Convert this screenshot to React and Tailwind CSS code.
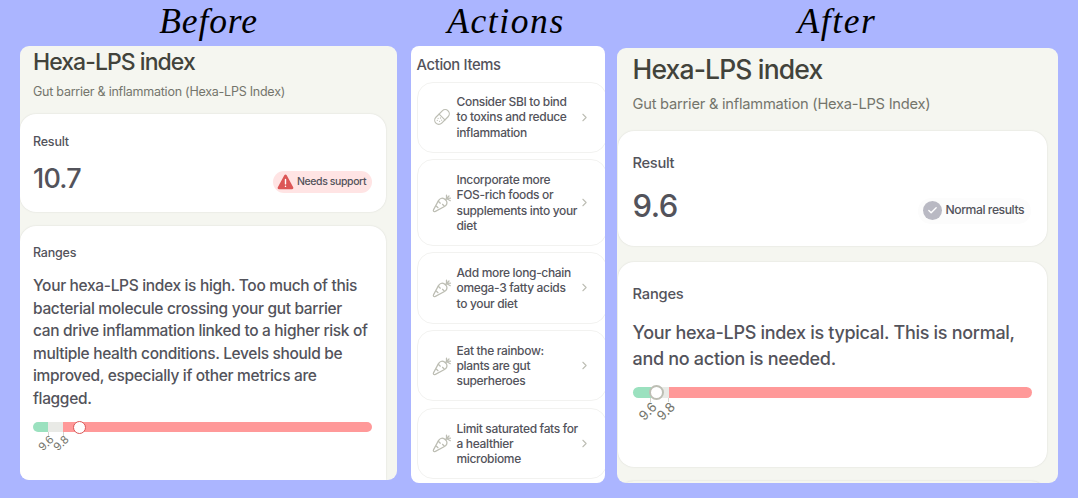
import { FiCheck, FiChevronRight } from 'react-icons/fi'

const actionItems = [
  { icon: 'pill', lines: ['Consider SBI to bind', 'to toxins and reduce', 'inflammation'] },
  { icon: 'carrot', lines: ['Incorporate more', 'FOS-rich foods or', 'supplements into your', 'diet'] },
  { icon: 'carrot', lines: ['Add more long-chain', 'omega-3 fatty acids', 'to your diet'] },
  { icon: 'carrot', lines: ['Eat the rainbow:', 'plants are gut', 'superheroes'] },
  { icon: 'carrot', lines: ['Limit saturated fats for', 'a healthier', 'microbiome'] },
]

const PillIcon = () => (
  <svg viewBox="0 0 20 20" className="size-5" fill="none" stroke="currentColor" strokeWidth="1.2" strokeLinecap="round">
    <g transform="rotate(-45 10 10)">
      <rect x="1.4" y="5.9" width="17.2" height="8.2" rx="4.1" />
      <path d="M10 5.9v8.2" />
      <path d="M4.3 9h.01M6.3 8.2h.01M8.2 9.6h.01M5.2 11.4h.01M7.5 12h.01" />
    </g>
  </svg>
)

const CarrotIcon = () => (
  <svg viewBox="0 0 20 20" className="size-5" fill="none" stroke="currentColor" strokeWidth="1.25" strokeLinecap="round" strokeLinejoin="round">
    <path d="M1.6 18.4c-.5-.5-.3-1.2 0-1.8L6.5 7.6c1.1-2 3.5-3 5.5-2 1.1.5 2 1.4 2.5 2.5.9 2-.1 4.3-2 5.4L3.4 18.4c-.6.3-1.3.5-1.8 0Z" />
    <path d="M6.3 8.2l2 2M4.5 13.2l1.5 1.5M10.5 11.3l1.7 1.7" />
    <path d="M13.3 6.7l3.7-3.7M14.5 5.5V2M14.5 5.5l4-.3M14.5 5.5l3.8 2.2" />
  </svg>
)

const WarningIcon = () => (
  <svg viewBox="0 0 17 16" className="h-4 w-[17px] shrink-0">
    <path d="M7.3 1.2c.5-.9 1.9-.9 2.4 0l6.5 12c.5.9-.1 2-1.2 2H2c-1.1 0-1.7-1.1-1.2-2Z" fill="#dc5757" />
    <path d="M8.5 5.5v4.4M8.5 12.2v.2" stroke="#fff" strokeWidth="1.4" strokeLinecap="round" />
  </svg>
)

const Heading = ({ children, className }) => (
  <h2 className={`font-['Liberation_Serif',serif] text-[35.5px] italic leading-[42px] whitespace-nowrap text-center text-black ${className}`}>
    {children}
  </h2>
)

const BeforePanel = () => (
  <section className="flex h-[434px] flex-col overflow-hidden rounded-[9px] bg-[#f5f6f0] pt-0.5">
    <h1 className="pl-[13px] text-[23px] leading-7 tracking-[-0.95px] text-[#42433b]">Hexa-LPS index</h1>
    <p className="mt-1.5 pl-[13px] text-[12.5px] font-normal leading-5 tracking-[-0.24px] text-[#74756c]">
      Gut barrier &amp; inflammation (Hexa-LPS Index)
    </p>

    <div className="mt-3 h-[98px] w-[366px] shrink-0 rounded-2xl bg-white pl-[13px] pr-3.5 pt-[17.5px] shadow-[0_0_2px_rgba(0,0,0,0.12)]">
      <p className="text-[12.5px] leading-5 tracking-[-0.2px] text-[#53535b]">Result</p>
      <div className="mt-[11px] flex items-center justify-between">
        <span className="text-[27px] leading-8 tracking-[-0.8px] text-[#53535b]">10.7</span>
        <span className="mt-[7px] flex h-[22px] w-[99px] items-center gap-[3px] rounded-full bg-[#ffe4e4] pl-1">
          <WarningIcon />
          <span className="whitespace-nowrap text-[10.5px] tracking-[-0.4px] text-[#53535b]">Needs support</span>
        </span>
      </div>
    </div>

    <div className="mt-[13.5px] w-[366px] flex-1 rounded-t-2xl bg-white pl-[13px] pr-3.5 pt-[17.5px] shadow-[0_0_2px_rgba(0,0,0,0.12)]">
      <p className="text-[12.5px] leading-5 tracking-[-0.2px] text-[#53535b]">Ranges</p>
      <p className="mt-3 whitespace-nowrap text-[15.5px] leading-[22.6px] tracking-[-0.33px] text-[#53535b]">
        Your hexa-LPS index is high. Too much of this<br />
        bacterial molecule crossing your gut barrier<br />
        can drive inflammation linked to a higher risk of<br />
        multiple health conditions. Levels should be<br />
        improved, especially if other metrics are<br />
        flagged.
      </p>
      <div className="relative mt-[11.5px] flex h-[10px] w-[339px]">
        <div className="w-[15px] rounded-l-full bg-[#9be1bf]" />
        <div className="w-[15px] bg-[#e9eae6]" />
        <div className="flex-1 rounded-r-full bg-[#ff9999]" />
        <div className="absolute -top-[1.5px] left-[40px] size-[13px] rounded-full border-[1.5px] border-[#d95757] bg-white" />
        <div className="absolute left-[15px] top-[10px] h-1 w-px bg-[#d3d4ce]" />
        <div className="absolute left-[30px] top-[10px] h-1 w-px bg-[#d3d4ce]" />
        <span className="absolute left-[4px] top-[15px] w-[18px] -rotate-45 text-center text-[11px] font-normal leading-3 text-[#74756c]">9.6</span>
        <span className="absolute left-[19px] top-[15px] w-[18px] -rotate-45 text-center text-[11px] font-normal leading-3 text-[#74756c]">9.8</span>
      </div>
    </div>
  </section>
)

const ActionsPanel = () => (
  <section className="h-[437px] overflow-hidden rounded-[8px] bg-white pl-[5.5px] pt-[9px]">
    <h3 className="text-[14.8px] leading-5 tracking-[-0.35px] text-[#53535b]">Action Items</h3>
    <ul className="mt-[6.5px] flex w-[190px] flex-col gap-[6.5px]">
      {actionItems.map((item) => (
        <li
          key={item.lines[0]}
          className="flex items-center rounded-2xl border border-[#f2f2f0] py-[11.7px] pl-[14px]"
        >
          <span className="w-[25px] shrink-0 text-[#bdbeb4]">
            {item.icon === 'pill' ? <PillIcon /> : <CarrotIcon />}
          </span>
          <p className="w-[121px] text-[12px] leading-[15.3px] tracking-[-0.33px] whitespace-nowrap text-[#53535b]">
            {item.lines.map((line) => (
              <span key={line} className="block">{line}</span>
            ))}
          </p>
          <FiChevronRight className="size-[13px] shrink-0 text-[#bdbeb4]" />
        </li>
      ))}
    </ul>
  </section>
)

const AfterPanel = () => (
  <section className="flex h-[435px] flex-col overflow-hidden rounded-[9px] bg-[#f5f6f0] pl-px pt-[5px]">
    <h1 className="pl-[15px] text-[26.5px] leading-8 tracking-[-0.85px] text-[#42433b]">Hexa-LPS index</h1>
    <p className="mt-[9px] pl-[15px] text-[14.7px] font-normal leading-5 tracking-[-0.24px] text-[#74756c]">
      Gut barrier &amp; inflammation (Hexa-LPS Index)
    </p>

    <div className="mt-[17px] h-[115px] w-[429px] shrink-0 rounded-2xl bg-white pl-[15px] pr-4 pt-[21px] shadow-[0_0_2px_rgba(0,0,0,0.12)]">
      <p className="text-[14.7px] leading-[22px] tracking-[-0.3px] text-[#53535b]">Result</p>
      <div className="mt-[14px] flex items-center justify-between">
        <span className="text-[31px] leading-9 tracking-[-0.5px] text-[#53535b]">9.6</span>
        <span className="mt-[9px] flex h-[26px] w-[113px] items-center gap-1 rounded-full bg-[#fcfcfc] pl-[5px]">
          <span className="flex size-[19px] shrink-0 items-center justify-center rounded-full bg-[#b9b9c3] text-white">
            <FiCheck className="size-[11px]" strokeWidth={3} />
          </span>
          <span className="whitespace-nowrap text-[12.2px] tracking-[-0.45px] text-[#53535b]">Normal results</span>
        </span>
      </div>
    </div>

    <div className="mt-4 h-[205px] w-[429px] shrink-0 rounded-2xl bg-white pl-[15px] pr-4 pt-[21px] shadow-[0_0_2px_rgba(0,0,0,0.12)]">
      <p className="text-[14.7px] leading-[22px] tracking-[-0.2px] text-[#53535b]">Ranges</p>
      <p className="mt-[14.5px] whitespace-nowrap text-[18px] leading-[26.6px] tracking-[-0.3px] text-[#53535b]">
        Your hexa-LPS index is typical. This is normal,<br />
        and no action is needed.
      </p>
      <div className="relative mt-[14.5px] flex h-[11px] w-[399px]">
        <div className="w-[18px] rounded-l-full bg-[#9be1bf]" />
        <div className="w-[18px] bg-[#e9eae6]" />
        <div className="flex-1 rounded-r-full bg-[#ff9999]" />
        <div className="absolute -top-[2px] left-[16px] size-[15px] rounded-full border-2 border-[#bdbeb4] bg-white" />
        <div className="absolute left-[17px] top-[11px] h-1 w-px bg-[#d3d4ce]" />
        <div className="absolute left-[35px] top-[11px] h-1 w-px bg-[#d3d4ce]" />
        <span className="absolute left-[4px] top-[17px] w-[21px] -rotate-45 text-center text-[13px] font-normal leading-[14px] text-[#74756c]">9.6</span>
        <span className="absolute left-[22px] top-[17px] w-[21px] -rotate-45 text-center text-[13px] font-normal leading-[14px] text-[#74756c]">9.8</span>
      </div>
    </div>
    <div className="mt-3.5 h-8 w-[429px] shrink-0 rounded-2xl bg-[#f5f6f0] shadow-[0_0_2px_rgba(0,0,0,0.12)]" />
  </section>
)

export default function App() {
  return (
    <main className="flex h-[498px] w-[1078px] overflow-hidden bg-[#abb5ff] pl-5 font-['Inter',sans-serif] font-[450]">
      <div className="w-[377px]">
        <Heading className="mb-1 tracking-[0.9px]">Before</Heading>
        <BeforePanel />
      </div>
      <div className="ml-3.5 w-[194px]">
        <Heading className="mb-1 pr-1 tracking-[1.6px]">Actions</Heading>
        <ActionsPanel />
      </div>
      <div className="ml-[11.5px] w-[441px]">
        <Heading className="mb-1.5 tracking-[1.6px]">After</Heading>
        <AfterPanel />
      </div>
    </main>
  )
}
